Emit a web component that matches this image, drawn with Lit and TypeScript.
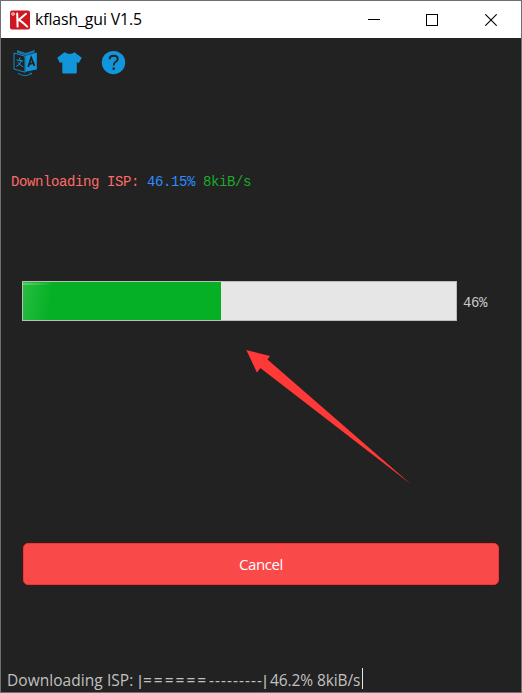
import { LitElement, html, css } from "lit";
import { customElement, property } from "lit/decorators.js";

@customElement("title-bar")
class TitleBar extends LitElement {
  static styles = css`
    :host { display: flex; align-items: center; height: 37px; background: #fff; color: #000; }
    .logo { margin-left: 9px; width: 20px; height: 20px; flex: none; }
    .name { margin-left: 5px; flex: 1; font: 15.8px/37px "Open Sans", "Noto Sans", sans-serif; letter-spacing: -0.1px; white-space: pre; }
    .controls { display: flex; margin-right: 1px; }
    .control { width: 58px; height: 36px; display: grid; place-items: center; }
    .control:last-child { margin-left: 1px; }
    .control svg { width: 12px; height: 12px; }
    svg { display: block; }
  `;
  render() {
    return html`
      <svg class="logo" viewBox="0 0 20 20">
        <rect width="20" height="19" y=".5" rx="2" fill="#cf1722" />
        <g fill="none" stroke="#fff" stroke-linecap="round">
          <circle cx="3" cy="4" r="1.3" stroke-width=".8" />
          <path d="M7.2 3.6L7.6 16.6M16 3.8L8.4 10.2M8.6 9.8Q12 11.4 17.2 16.6" stroke-width="2" />
        </g>
      </svg>
      <span class="name">kflash_gui V1.5</span>
      <div class="controls">
        <div class="control"><svg viewBox="0 0 12 12"><path d="M0 5.5H12" stroke="#000" /></svg></div>
        <div class="control"><svg viewBox="0 0 12 12"><rect x=".5" y=".5" width="11" height="11" fill="none" stroke="#000" /></svg></div>
        <div class="control"><svg viewBox="0 0 12 12"><path d="M.3.3L11.7 11.7M11.7.3L.3 11.7" stroke="#000" stroke-width="1.1" /></svg></div>
      </div>`;
  }
}

@customElement("tool-bar")
class ToolBar extends LitElement {
  static styles = css`
    :host { display: flex; gap: 18px; padding: 11px 0 0 11px; color: #1296db; }
    svg { display: block; width: 26px; height: 28px; }
  `;
  render() {
    return html`
      <svg viewBox="0 0 26 28">
        <path d="M13.4 6.8L24.8 3.6V20.4L13.4 22.8Z" fill="#1296db" />
        <path d="M5 1L13.4 4L22.6 1V3.4L13.4 6.6L5 3.8Z" fill="#1296db" opacity=".75" />
        <path d="M2 4L13 7.2V23.2L2 20Z" fill="none" stroke="#1296db" stroke-width=".9" />
        <path d="M4.5 11L11 12M7.8 8.6V11.2M9.6 11.8Q8 16 4.2 17.4M6 13.2Q8 16.5 11.3 18" fill="none" stroke="#1296db" />
        <path d="M16.2 18L19.2 8.6L22.5 16.8M17.3 15L21.4 14.2" fill="none" stroke="#222" stroke-width="1.8" />
        <path d="M6 24.4Q13 28.6 20 24.5L17.4 24" fill="none" stroke="#1296db" stroke-width=".8" />
      </svg>
      <svg viewBox="0 0 26 28"><path d="M8.5 3.2Q14 6.6 18.5 3.2L25.8 8.8L22.8 14L20.8 13.2V23.2Q20.8 24.5 19.5 24.5H7.6Q6.3 24.5 6.3 23.2V13.2L4 14L1.2 8.8Z" fill="#1296db" /></svg>
      <svg viewBox="0 0 26 28"><circle cx="13.5" cy="13.6" r="11.7" fill="#1296db" /><path d="M9.6 10.2Q9.6 6.8 13.7 6.8Q17.7 6.8 17.7 10Q17.7 12 15.5 13Q13.7 13.9 13.7 16.6" fill="none" stroke="#222" stroke-width="1.9" /><rect x="12.6" y="18.5" width="2.2" height="2.3" fill="#222" /></svg>`;
  }
}

@customElement("app-root")
class AppRoot extends LitElement {
  @property({ type: Number }) percent = 46;
  static styles = css`
    :host { display: flex; flex-direction: column; position: relative; box-sizing: border-box; width: 522px; height: 693px; border: 1px solid #707070; background: #222; overflow: hidden; }
    .message { margin: 95px 0 0 10px; height: 20px; font: 14px/20px "Liberation Mono", monospace; letter-spacing: -0.4px; color: #ff6b68; white-space: pre; }
    .value { color: #2d8cff; }
    .speed { color: #1aac2a; }
    .progress { display: flex; align-items: center; margin: 89px 0 0 21px; height: 40px; }
    .track { box-sizing: border-box; width: 435px; height: 40px; border: 1px solid #bcbcbc; background: #e6e6e6; }
    .fill { height: 100%; background: linear-gradient(90deg, #8be48b88, transparent 30px) 0 1px / 100% 2px no-repeat, linear-gradient(98deg, #27bd41, #06b025 30px); }
    .percent { margin: 3px 0 0 6px; font: 14px/20px "Liberation Mono", monospace; letter-spacing: -0.4px; color: #c8c8c8; }
    .arrow { position: absolute; left: 244px; top: 348px; width: 168px; height: 138px; }
    .cancel { box-sizing: border-box; width: 476px; height: 42px; margin: 222px 0 0 22px; padding: 0; border: 1px solid #ff3030; border-radius: 5px; background: #fa4949; color: #fff; font: 15px/40px "Open Sans", "Noto Sans", sans-serif; letter-spacing: -0.4px; }
    .status { display: flex; margin-top: auto; margin-left: 6px; height: 24px; font: 15.5px/25px "Open Sans", "Noto Sans", sans-serif; letter-spacing: 0.05px; color: #c0c0c0; white-space: pre; }
    .label { width: 131px; }
    .mark { width: 5px; font-family: "Liberation Sans", sans-serif; letter-spacing: 0; }
    .done { width: 66px; letter-spacing: 2px; }
    .left { width: 54px; letter-spacing: 1px; }
    .rate { width: 92px; margin-left: 2px; letter-spacing: -0.1px; }
    .caret { width: 1px; height: 21px; background: #e6e6e6; }
  `;
  render() {
    return html`
      <title-bar></title-bar>
      <tool-bar></tool-bar>
      <div class="message">Downloading ISP: <span class="value">46.15%</span> <span class="speed">8kiB/s</span></div>
      <div class="progress">
        <div class="track"><div class="fill" style="width:${(this.percent * 198) / 199.18}%"></div></div>
        <span class="percent">${this.percent}%</span>
      </div>
      <button class="cancel">Cancel</button>
      <div class="status"><span class="label">Downloading ISP:</span><span class="mark">|</span><span class="done">======</span><span class="left">---------</span><span class="mark">|</span><span class="rate">46.2% 8kiB/s</span><span class="caret"></span></div>
      <svg class="arrow" viewBox="245 349 168 138"><path d="M246.3 350L270 356L267.5 359.5L411 484.2L260.3 368L257 372.7Z" fill="#ff3838" /></svg>`;
  }
}
